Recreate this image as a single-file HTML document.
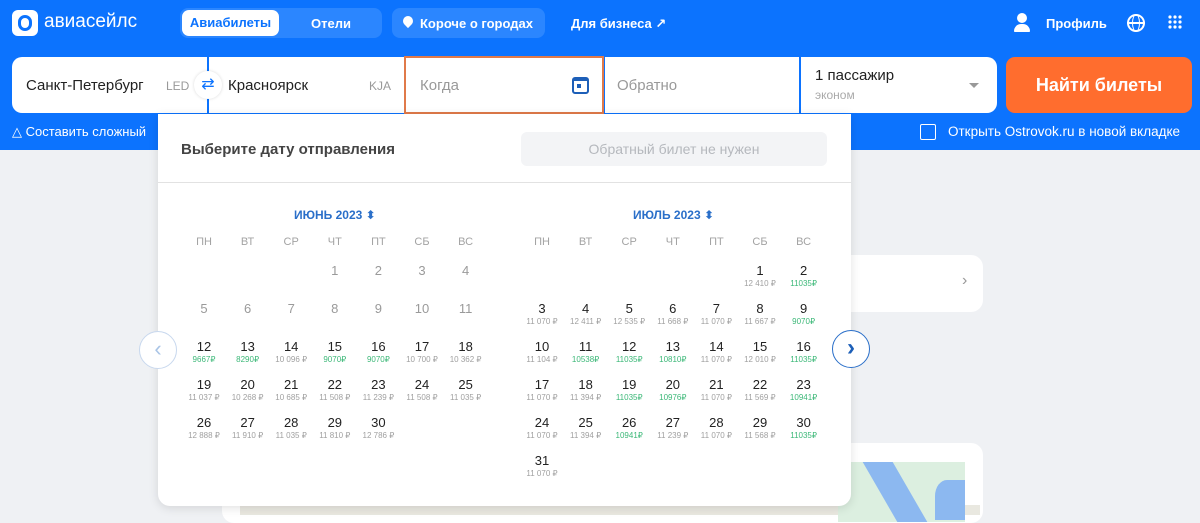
<!DOCTYPE html>
<html><head><meta charset="utf-8"><style>
*{box-sizing:border-box;margin:0;padding:0}
body{width:1200px;height:515px;overflow:hidden;background:#eff1f4;font-family:"Liberation Sans","DejaVu Sans",sans-serif;position:relative}
.a{position:absolute}
.hdr{left:0;top:0;width:1200px;height:150px;background:#0c73fe}
.w{color:#fff;font-weight:bold;font-size:13px}
.c{position:absolute;width:50px;margin-left:-25px;text-align:center;font-size:13px;color:#222;line-height:15px}
.c i{display:block;font-style:normal;font-size:8px;color:#a0a0a0;line-height:11px}
.c i.g{color:#3cb878}
.d{color:#9a9a9a}
.wd{position:absolute;width:40px;margin-left:-20px;text-align:center;font-size:11px;color:#a3a3a3}
</style></head><body>
<div class="a hdr"></div>
<div class="a" style="left:12px;top:10px;width:26px;height:26px;border-radius:6px;background:#fff"></div>
<div class="a" style="left:18px;top:15px;width:14px;height:16px;border:3px solid #0c73fe;border-radius:7px"></div>
<div class="a" style="left:44px;top:11px;color:#fff;font-size:19px">авиасейлс</div>
<div class="a" style="left:180px;top:8px;width:202px;height:30px;border-radius:8px;background:#2b86ff"></div>
<div class="a w" style="left:182px;top:10px;width:97px;height:26px;border-radius:7px;background:#fff;color:#0c73fe;text-align:center;line-height:26px">Авиабилеты</div>
<div class="a w" style="left:311px;top:16px">Отели</div>
<div class="a" style="left:392px;top:8px;width:153px;height:30px;border-radius:8px;background:#2b86ff"></div>
<div class="a" style="left:403px;top:16px;width:10px;height:10px;border-radius:50% 50% 50% 0;transform:rotate(-45deg);background:#fff"></div>
<div class="a w" style="left:420px;top:16px">Короче о городах</div>
<div class="a w" style="left:571px;top:16px">Для бизнеса ↗</div>
<div class="a" style="left:1017px;top:13px;width:10px;height:10px;border-radius:50%;background:#fff"></div>
<div class="a" style="left:1014px;top:24px;width:16px;height:8px;border-radius:8px 8px 1px 1px;background:#fff"></div>
<div class="a w" style="left:1046px;top:16px">Профиль</div>
<div class="a" style="left:1127px;top:14px;width:18px;height:18px;border:2px solid #fff;border-radius:50%"></div>
<div class="a" style="left:1132px;top:14px;width:8px;height:18px;border:1.5px solid #fff;border-radius:50%"></div>
<div class="a" style="left:1127px;top:22px;width:18px;height:1.5px;background:#fff"></div>
<svg class="a" style="left:1168px;top:15px" width="14" height="14"><g fill="#fff"><circle cx="2" cy="2" r="1.6"/><circle cx="7" cy="2" r="1.6"/><circle cx="12" cy="2" r="1.6"/><circle cx="2" cy="7" r="1.6"/><circle cx="7" cy="7" r="1.6"/><circle cx="12" cy="7" r="1.6"/><circle cx="2" cy="12" r="1.6"/><circle cx="7" cy="12" r="1.6"/><circle cx="12" cy="12" r="1.6"/></g></svg>
<div class="a" style="left:12px;top:57px;width:985px;height:56px;border-radius:10px;background:#fff"></div>
<div class="a" style="left:207px;top:57px;width:2px;height:56px;background:#0c73fe"></div>
<div class="a" style="left:603px;top:57px;width:2px;height:56px;background:#0c73fe"></div>
<div class="a" style="left:799px;top:57px;width:2px;height:56px;background:#0c73fe"></div>
<div class="a" style="left:404px;top:56px;width:200px;height:58px;border:2px solid #e07a4a"></div>
<div class="a" style="left:26px;top:77px;font-size:15px;color:#222">Санкт-Петербург</div>
<div class="a" style="left:166px;top:79px;font-size:12px;color:#999">LED</div>
<div class="a" style="left:194px;top:71px;width:28px;height:28px;border-radius:50%;background:#fff;box-shadow:0 0 3px rgba(0,0,0,.15);color:#0c73fe;text-align:center;line-height:28px;font-size:16px">⇄</div>
<div class="a" style="left:228px;top:77px;font-size:15px;color:#222">Красноярск</div>
<div class="a" style="left:369px;top:79px;font-size:12px;color:#999">KJA</div>
<div class="a" style="left:420px;top:77px;font-size:15px;color:#999">Когда</div>
<div class="a" style="left:572px;top:77px;width:17px;height:17px;border:2px solid #1d5fb8;border-top-width:4px;border-radius:3px"></div>
<div class="a" style="left:577px;top:84px;width:4px;height:4px;background:#1d5fb8"></div>
<div class="a" style="left:617px;top:77px;font-size:15px;color:#999">Обратно</div>
<div class="a" style="left:815px;top:67px;font-size:15px;color:#222">1 пассажир</div>
<div class="a" style="left:815px;top:88px;font-size:12px;color:#aaa">эконом</div>
<div class="a" style="left:969px;top:83px;border:5px solid transparent;border-top:5px solid #999"></div>
<div class="a" style="left:1006px;top:57px;width:186px;height:56px;border-radius:9px;background:#ff6d2e;color:#fff;font-weight:bold;font-size:18px;text-align:center;line-height:56px">Найти билеты</div>
<div class="a" style="left:12px;top:124px;color:#fff;font-size:13px">△ Составить сложный</div>
<div class="a" style="left:920px;top:124px;width:16px;height:16px;border:1.5px solid #fff;border-radius:2px"></div>
<div class="a" style="left:948px;top:124px;color:#fff;font-size:13.5px">Открыть Ostrovok.ru в новой вкладке</div>
<div class="a" style="left:800px;top:255px;width:183px;height:57px;border-radius:12px;background:#fff"></div>
<div class="a" style="left:962px;top:272px;color:#999;font-size:16px">›</div>
<div class="a" style="left:222px;top:443px;width:761px;height:80px;border-radius:12px;background:#fff"></div>
<div class="a" style="left:240px;top:505px;width:740px;height:10px;background:#e9e8e0"></div>
<div class="a" style="left:838px;top:462px;width:127px;height:60px;background:#dcefe0"></div>
<div class="a" style="left:880px;top:462px;width:30px;height:60px;background:#8cb8f0;transform:skewX(30deg)"></div>
<div class="a" style="left:935px;top:480px;width:30px;height:40px;background:#8cb8f0;border-radius:40% 0 0 0"></div>
<div class="a" style="left:158px;top:114px;width:693px;height:392px;background:#fff;border-radius:0 0 12px 12px;box-shadow:0 2px 10px rgba(0,0,0,.12)"></div>
<div class="a" style="left:181px;top:141px;font-size:15px;font-weight:bold;color:#444">Выберите дату отправления</div>
<div class="a" style="left:521px;top:132px;width:306px;height:34px;border-radius:6px;background:#f3f4f6;color:#b5b8bd;font-size:14px;text-align:center;line-height:34px">Обратный билет не нужен</div>
<div class="a" style="left:158px;top:182px;width:693px;height:1px;background:#e2e2e2"></div>
<div class="a" style="left:294px;top:208px;color:#2a6fc9;font-weight:bold;font-size:12px">ИЮНЬ 2023 ⬍</div>
<div class="a" style="left:633px;top:208px;color:#2a6fc9;font-weight:bold;font-size:12px">ИЮЛЬ 2023 ⬍</div>
<div class="a" style="left:139px;top:331px;width:38px;height:38px;border-radius:50%;border:1px solid #c8d8ee;background:#fff;color:#a9c4e6;text-align:center;line-height:34px;font-size:22px">‹</div>
<div class="a" style="left:832px;top:330px;width:38px;height:38px;border-radius:50%;border:1.5px solid #2a6fc9;background:#fff;color:#1d5fb8;text-align:center;line-height:34px;font-size:24px;font-weight:bold">›</div>
<div id="cal"></div>
<script>
var cal=document.getElementById('cal'),h='';
var wds=['ПН','ВТ','СР','ЧТ','ПТ','СБ','ВС'];
function month(x0,start,days,prices,disabledUpto){
 for(var i=0;i<7;i++)h+='<div class="wd" style="left:'+(x0+i*43.6)+'px;top:236px">'+wds[i]+'</div>';
 for(var d=1;d<=days;d++){var p=start+d-1,col=p%7,row=Math.floor(p/7);
  var x=x0+col*43.6,y=263+row*38;var pr=prices[d];
  var inner=d+(pr?'<i class="'+(pr[1]?'g':'')+'">'+pr[0]+'</i>':'');
  h+='<div class="c'+(d<=disabledUpto?' d':'')+'" style="left:'+x+'px;top:'+y+'px">'+inner+'</div>';}
}
function P(s){var o={};s.split(',').forEach(function(t){var a=t.split(':');var g=/g/.test(a[1]);var n=a[1].replace('g','');o[a[0]]=[g?n+'₽':n.replace(/^(\d+)(\d{3})$/,'$1 $2')+' ₽',g];});return o;}
var jun=P('12:9667g,13:8290g,14:10096,15:9070g,16:9070g,17:10700,18:10362,19:11037,20:10268,21:10685,22:11508,23:11239,24:11508,25:11035,26:12888,27:11910,28:11035,29:11810,30:12786');
var jul=P('1:12410,2:11035g,3:11070,4:12411,5:12535,6:11668,7:11070,8:11667,9:9070g,10:11104,11:10538g,12:11035g,13:10810g,14:11070,15:12010,16:11035g,17:11070,18:11394,19:11035g,20:10976g,21:11070,22:11569,23:10941g,24:11070,25:11394,26:10941g,27:11239,28:11070,29:11568,30:11035g,31:11070');
month(204,3,30,jun,11);month(542,5,31,jul,0);
cal.innerHTML=h;
</script>
</body></html>
